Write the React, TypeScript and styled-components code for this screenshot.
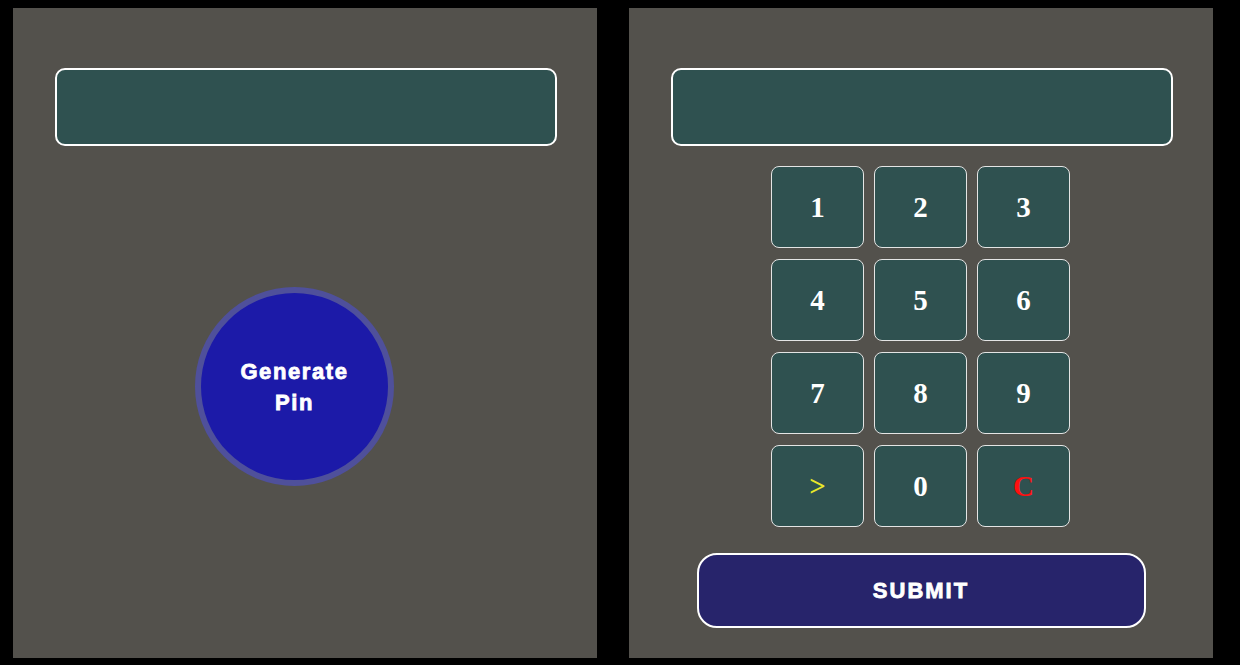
import React from "react";
import styled, { createGlobalStyle } from "styled-components";

const Global = createGlobalStyle`
  html, body { margin: 0; padding: 0; background: #000; }
  body { font-family: "Liberation Sans", Arial, sans-serif; }
`;

const Page = styled.div`
  display: flex;
  gap: 32px;
  padding: 8px 0 0 13px;
  background: #000;
  height: 665px;
  box-sizing: border-box;
`;

const Panel = styled.section`
  width: 584px;
  height: 650px;
  background: #53514c;
  box-sizing: border-box;
  padding: 60px 40px 0 42px;
  display: flex;
  flex-direction: column;
  align-items: flex-start;
`;

const Display = styled.input`
  width: 502px;
  height: 78px;
  box-sizing: border-box;
  border: 2px solid #fff;
  border-radius: 10px;
  background: #2f5150;
  color: #fff;
  font-size: 28px;
  outline: none;
  padding: 0 16px;
`;

const GenerateButton = styled.button`
  margin: 141px 0 0 140px;
  width: 199px;
  height: 199px;
  border-radius: 50%;
  border: 6px solid #4f509b;
  background: #1c1aa8;
  color: #fff;
  font-family: "Liberation Sans", Arial, sans-serif;
  font-weight: 700;
  font-size: 22px;
  line-height: 31px;
  letter-spacing: 1.6px;
  -webkit-text-stroke: 0.8px #fff;
  padding: 0 28px;
  box-sizing: border-box;
  cursor: pointer;
`;

const Keypad = styled.div`
  align-self: center;
  margin: 20px 3px 0 0;
  display: grid;
  grid-template-columns: repeat(3, 93px);
  grid-auto-rows: 82px;
  column-gap: 10px;
  row-gap: 11px;
`;

const Key = styled.button<{ $color?: string }>`
  box-sizing: border-box;
  border: 1px solid #e4e4e4;
  border-radius: 8px;
  background: #2f5150;
  color: ${(p) => p.$color ?? "#fff"};
  font-family: "Liberation Serif", "Times New Roman", serif;
  font-weight: 700;
  font-size: 29px;
  display: flex;
  align-items: center;
  justify-content: center;
  padding: 0;
  cursor: pointer;
`;

const SubmitButton = styled.button`
  align-self: center;
  margin: 26px 2px 0 0;
  width: 449px;
  height: 75px;
  box-sizing: border-box;
  border: 2px solid #fff;
  border-radius: 20px;
  background: #27246b;
  color: #fff;
  font-family: "Liberation Sans", Arial, sans-serif;
  font-weight: 700;
  font-size: 22px;
  letter-spacing: 2px;
  -webkit-text-stroke: 0.8px #fff;
  cursor: pointer;
`;

const keys: { label: string; color?: string }[] = [
  { label: "1" },
  { label: "2" },
  { label: "3" },
  { label: "4" },
  { label: "5" },
  { label: "6" },
  { label: "7" },
  { label: "8" },
  { label: "9" },
  { label: ">", color: "#e8e82a" },
  { label: "0" },
  { label: "C", color: "#ff1010" },
];

export default function App() {
  return (
    <>
      <Global />
      <Page>
        <Panel>
          <Display type="text" readOnly />
          <GenerateButton>Generate Pin</GenerateButton>
        </Panel>
        <Panel>
          <Display type="text" readOnly />
          <Keypad>
            {keys.map((k) => (
              <Key key={k.label} $color={k.color}>
                {k.label}
              </Key>
            ))}
          </Keypad>
          <SubmitButton>SUBMIT</SubmitButton>
        </Panel>
      </Page>
    </>
  );
}
